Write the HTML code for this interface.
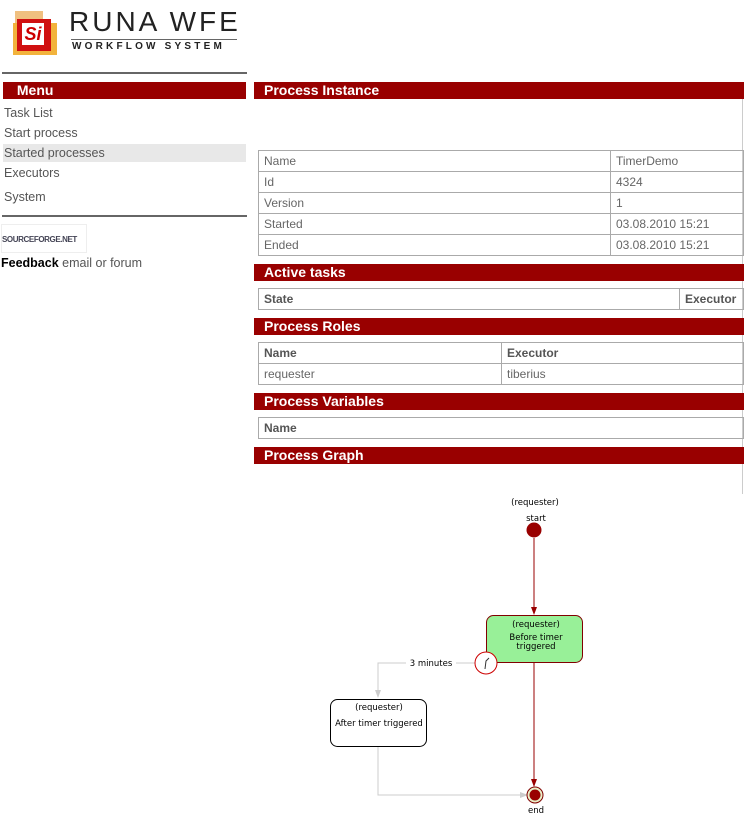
<!DOCTYPE html>
<html><head><meta charset="utf-8"><style>
body{margin:0;width:744px;height:821px;position:relative;background:#fff;font-family:"Liberation Sans",sans-serif;overflow:hidden}
.a{position:absolute}
.bar{position:absolute;background:#990000;color:#fff;font-weight:bold;font-size:14px;line-height:17px;height:17px;padding-left:10px;box-sizing:border-box}
table{position:absolute;border-collapse:collapse;font-size:12px;color:#666}
td{border:1px solid #aaa;height:21px;padding:0 0 0 5px;box-sizing:border-box}
th{border:1px solid #aaa;height:21px;padding:0 0 0 5px;text-align:left;font-weight:bold;color:#555;box-sizing:border-box}
.m{position:absolute;left:4px;font-size:12.5px;color:#555}
</style></head><body>
<!-- logo -->
<div class="a" style="left:13px;top:9px;width:46px;height:46px">
 <div class="a" style="left:2px;top:2px;width:28px;height:14px;background:#f0c080"></div>
 <div class="a" style="left:0;top:14px;width:44px;height:32px;background:#f2b33c"></div>
 <div class="a" style="left:4px;top:10px;width:34px;height:32px;background:#d01010"></div>
 <div class="a" style="left:9px;top:14px;width:22px;height:22px;background:#fff;color:#c00;font-weight:bold;font-size:18px;line-height:22px;text-align:center;font-style:italic">Si</div>
</div>
<div class="a" style="left:69px;top:6px;font-size:28px;letter-spacing:3px;color:#222;line-height:32px">RUNA WFE</div>
<div class="a" style="left:71px;top:39px;width:166px;height:1px;background:#666"></div>
<div class="a" style="left:72px;top:41px;font-size:10px;letter-spacing:3.2px;color:#222;font-weight:bold">WORKFLOW SYSTEM</div>
<!-- left -->
<div class="a" style="left:2px;top:72px;width:245px;height:2px;background:#666"></div>
<div class="bar" style="left:3px;top:82px;width:243px;font-size:14px">&nbsp;Menu</div>
<div class="m" style="top:106px">Task List</div>
<div class="m" style="top:126px">Start process</div>
<div class="a" style="left:3px;top:144px;width:243px;height:18px;background:#e8e8e8"></div>
<div class="m" style="top:146px">Started processes</div>
<div class="m" style="top:166px">Executors</div>
<div class="m" style="top:190px">System</div>
<div class="a" style="left:2px;top:215px;width:245px;height:2px;background:#666"></div>
<div class="a" style="left:1px;top:224px;width:86px;height:29px;border:1px solid #eee;box-sizing:border-box;font-size:8px;font-weight:bold;color:#445;line-height:29px;letter-spacing:-0.4px">SOURCEFORGE.NET</div>
<div class="a" style="left:1px;top:256px;font-size:12.5px;color:#555"><b style="color:#000">Feedback</b> email or forum</div>
<!-- right -->
<div class="a" style="left:742px;top:82px;width:1px;height:412px;background:#ccc"></div>
<div class="bar" style="left:254px;top:82px;width:490px">Process Instance</div>
<table style="left:258px;top:150px;width:486px">
<tr><td style="width:352px">Name</td><td>TimerDemo</td></tr>
<tr><td>Id</td><td>4324</td></tr>
<tr><td>Version</td><td>1</td></tr>
<tr><td>Started</td><td>03.08.2010 15:21</td></tr>
<tr><td>Ended</td><td>03.08.2010 15:21</td></tr>
</table>
<div class="bar" style="left:254px;top:264px;width:490px">Active tasks</div>
<table style="left:258px;top:288px;width:486px"><tr><th style="width:421px">State</th><th>Executor</th></tr></table>
<div class="bar" style="left:254px;top:318px;width:490px">Process Roles</div>
<table style="left:258px;top:342px;width:486px"><tr><th style="width:243px">Name</th><th>Executor</th></tr><tr><td>requester</td><td>tiberius</td></tr></table>
<div class="bar" style="left:254px;top:393px;width:490px">Process Variables</div>
<table style="left:258px;top:417px;width:486px"><tr><th>Name</th></tr></table>
<div class="bar" style="left:254px;top:447px;width:490px">Process Graph</div>
<svg class="a" style="left:0;top:0" width="744" height="821" font-family="DejaVu Sans,sans-serif" font-size="8.5">
<text x="535" y="505" text-anchor="middle" fill="#000">(requester)</text>
<text x="536" y="521" text-anchor="middle">start</text>
<circle cx="534" cy="530" r="7.5" fill="#990000"/>
<line x1="534" y1="538" x2="534" y2="612" stroke="#990000"/>
<path d="M531 607 L534 615 L537 607Z" fill="#990000"/>
<rect x="486.5" y="615.5" width="96" height="47" rx="7" fill="#98f098" stroke="#800000"/>
<text x="536" y="627" text-anchor="middle">(requester)</text>
<text x="536" y="640" text-anchor="middle">Before timer</text>
<text x="536" y="649" text-anchor="middle">triggered</text>
<line x1="534" y1="663" x2="534" y2="786" stroke="#990000"/>
<path d="M531 779 L534 787 L537 779Z" fill="#990000"/>
<polyline points="475,663 456,663" stroke="#ccc" fill="none"/>
<polyline points="406,663 378,663 378,696" stroke="#ccc" fill="none"/>
<path d="M375 690 L378 698 L381 690Z" fill="#ccc"/>
<text x="431" y="666" text-anchor="middle">3 minutes</text>
<circle cx="486" cy="663" r="11" fill="#fff" stroke="#c00"/>
<path d="M485 669 L486 661 L489 658" stroke="#333" fill="none"/>
<rect x="330.5" y="699.5" width="96" height="47" rx="7" fill="#fff" stroke="#000"/>
<text x="379" y="710" text-anchor="middle">(requester)</text>
<text x="379" y="726" text-anchor="middle">After timer triggered</text>
<polyline points="378,747 378,795 524,795" stroke="#ccc" fill="none"/>
<path d="M520 792 L528 795 L520 798Z" fill="#ccc"/>
<circle cx="535" cy="795" r="8" fill="#e8f0c8" stroke="#800000"/>
<circle cx="535" cy="795" r="5.5" fill="#990000"/>
<text x="536" y="813" text-anchor="middle">end</text>
</svg>
</body></html>
